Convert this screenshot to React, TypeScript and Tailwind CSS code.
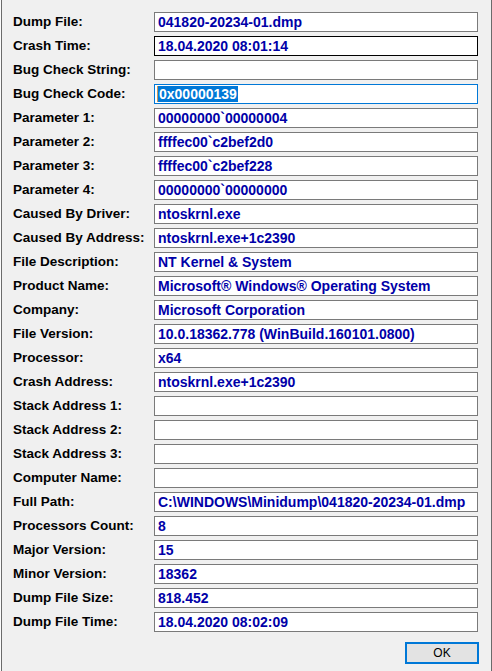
import React from "react";

type Row = { label: string; value: string; state?: "hover" | "focus" };

const rows: Row[] = [
  { label: "Dump File:", value: "041820-20234-01.dmp" },
  { label: "Crash Time:", value: "18.04.2020 08:01:14", state: "hover" },
  { label: "Bug Check String:", value: "" },
  { label: "Bug Check Code:", value: "0x00000139", state: "focus" },
  { label: "Parameter 1:", value: "00000000`00000004" },
  { label: "Parameter 2:", value: "ffffec00`c2bef2d0" },
  { label: "Parameter 3:", value: "ffffec00`c2bef228" },
  { label: "Parameter 4:", value: "00000000`00000000" },
  { label: "Caused By Driver:", value: "ntoskrnl.exe" },
  { label: "Caused By Address:", value: "ntoskrnl.exe+1c2390" },
  { label: "File Description:", value: "NT Kernel & System" },
  { label: "Product Name:", value: "Microsoft® Windows® Operating System" },
  { label: "Company:", value: "Microsoft Corporation" },
  { label: "File Version:", value: "10.0.18362.778 (WinBuild.160101.0800)" },
  { label: "Processor:", value: "x64" },
  { label: "Crash Address:", value: "ntoskrnl.exe+1c2390" },
  { label: "Stack Address 1:", value: "" },
  { label: "Stack Address 2:", value: "" },
  { label: "Stack Address 3:", value: "" },
  { label: "Computer Name:", value: "" },
  { label: "Full Path:", value: "C:\\WINDOWS\\Minidump\\041820-20234-01.dmp" },
  { label: "Processors Count:", value: "8" },
  { label: "Major Version:", value: "15" },
  { label: "Minor Version:", value: "18362" },
  { label: "Dump File Size:", value: "818.452" },
  { label: "Dump File Time:", value: "18.04.2020 08:02:09" },
];

function Field({ row }: { row: Row }) {
  const border =
    row.state === "hover"
      ? "border-black"
      : row.state === "focus"
      ? "border-[#0078d7]"
      : "border-[#7a7a7a]";

  return (
    <div
      className={`h-5 w-[324px] border ${border} bg-white flex items-center pl-[2px] overflow-hidden`}
    >
      {row.state === "focus" ? (
        <span className="flex items-center h-4 bg-[#0078d7] text-white pr-[1px]">
          <span className="w-px h-4 bg-[#c89a5a] mr-px" />
          {row.value}
        </span>
      ) : (
        <span className="pl-[1px] text-[#0000a8]">{row.value}</span>
      )}
    </div>
  );
}

export default function App() {
  return (
    <div className="w-[492px] h-[671px] bg-[#fbfbfb] pl-px">
      <div
        className="h-full bg-[#f0f0f0] border-l border-r border-[#6b6b6b] flex flex-col"
        style={{ fontFamily: '"Liberation Sans", Arial, sans-serif' }}
      >
        <div className="pt-3 pl-[11px] flex flex-col gap-1">
          {rows.map((row, index) => (
            <div className="flex items-center h-5" key={index}>
              <div className="w-[141px] text-[13.5px] font-bold text-black leading-5 whitespace-nowrap">
                {row.label}
              </div>
              <div className="text-[14px] font-bold leading-5 whitespace-nowrap">
                <Field row={row} />
              </div>
            </div>
          ))}
        </div>
        <div className="flex justify-end pr-[12px] pt-[10px]">
          <button className="w-[74px] h-[22px] border-2 border-[#0078d7] bg-[#e3e3e3] text-[12px] text-black leading-none">
            OK
          </button>
        </div>
      </div>
    </div>
  );
}
